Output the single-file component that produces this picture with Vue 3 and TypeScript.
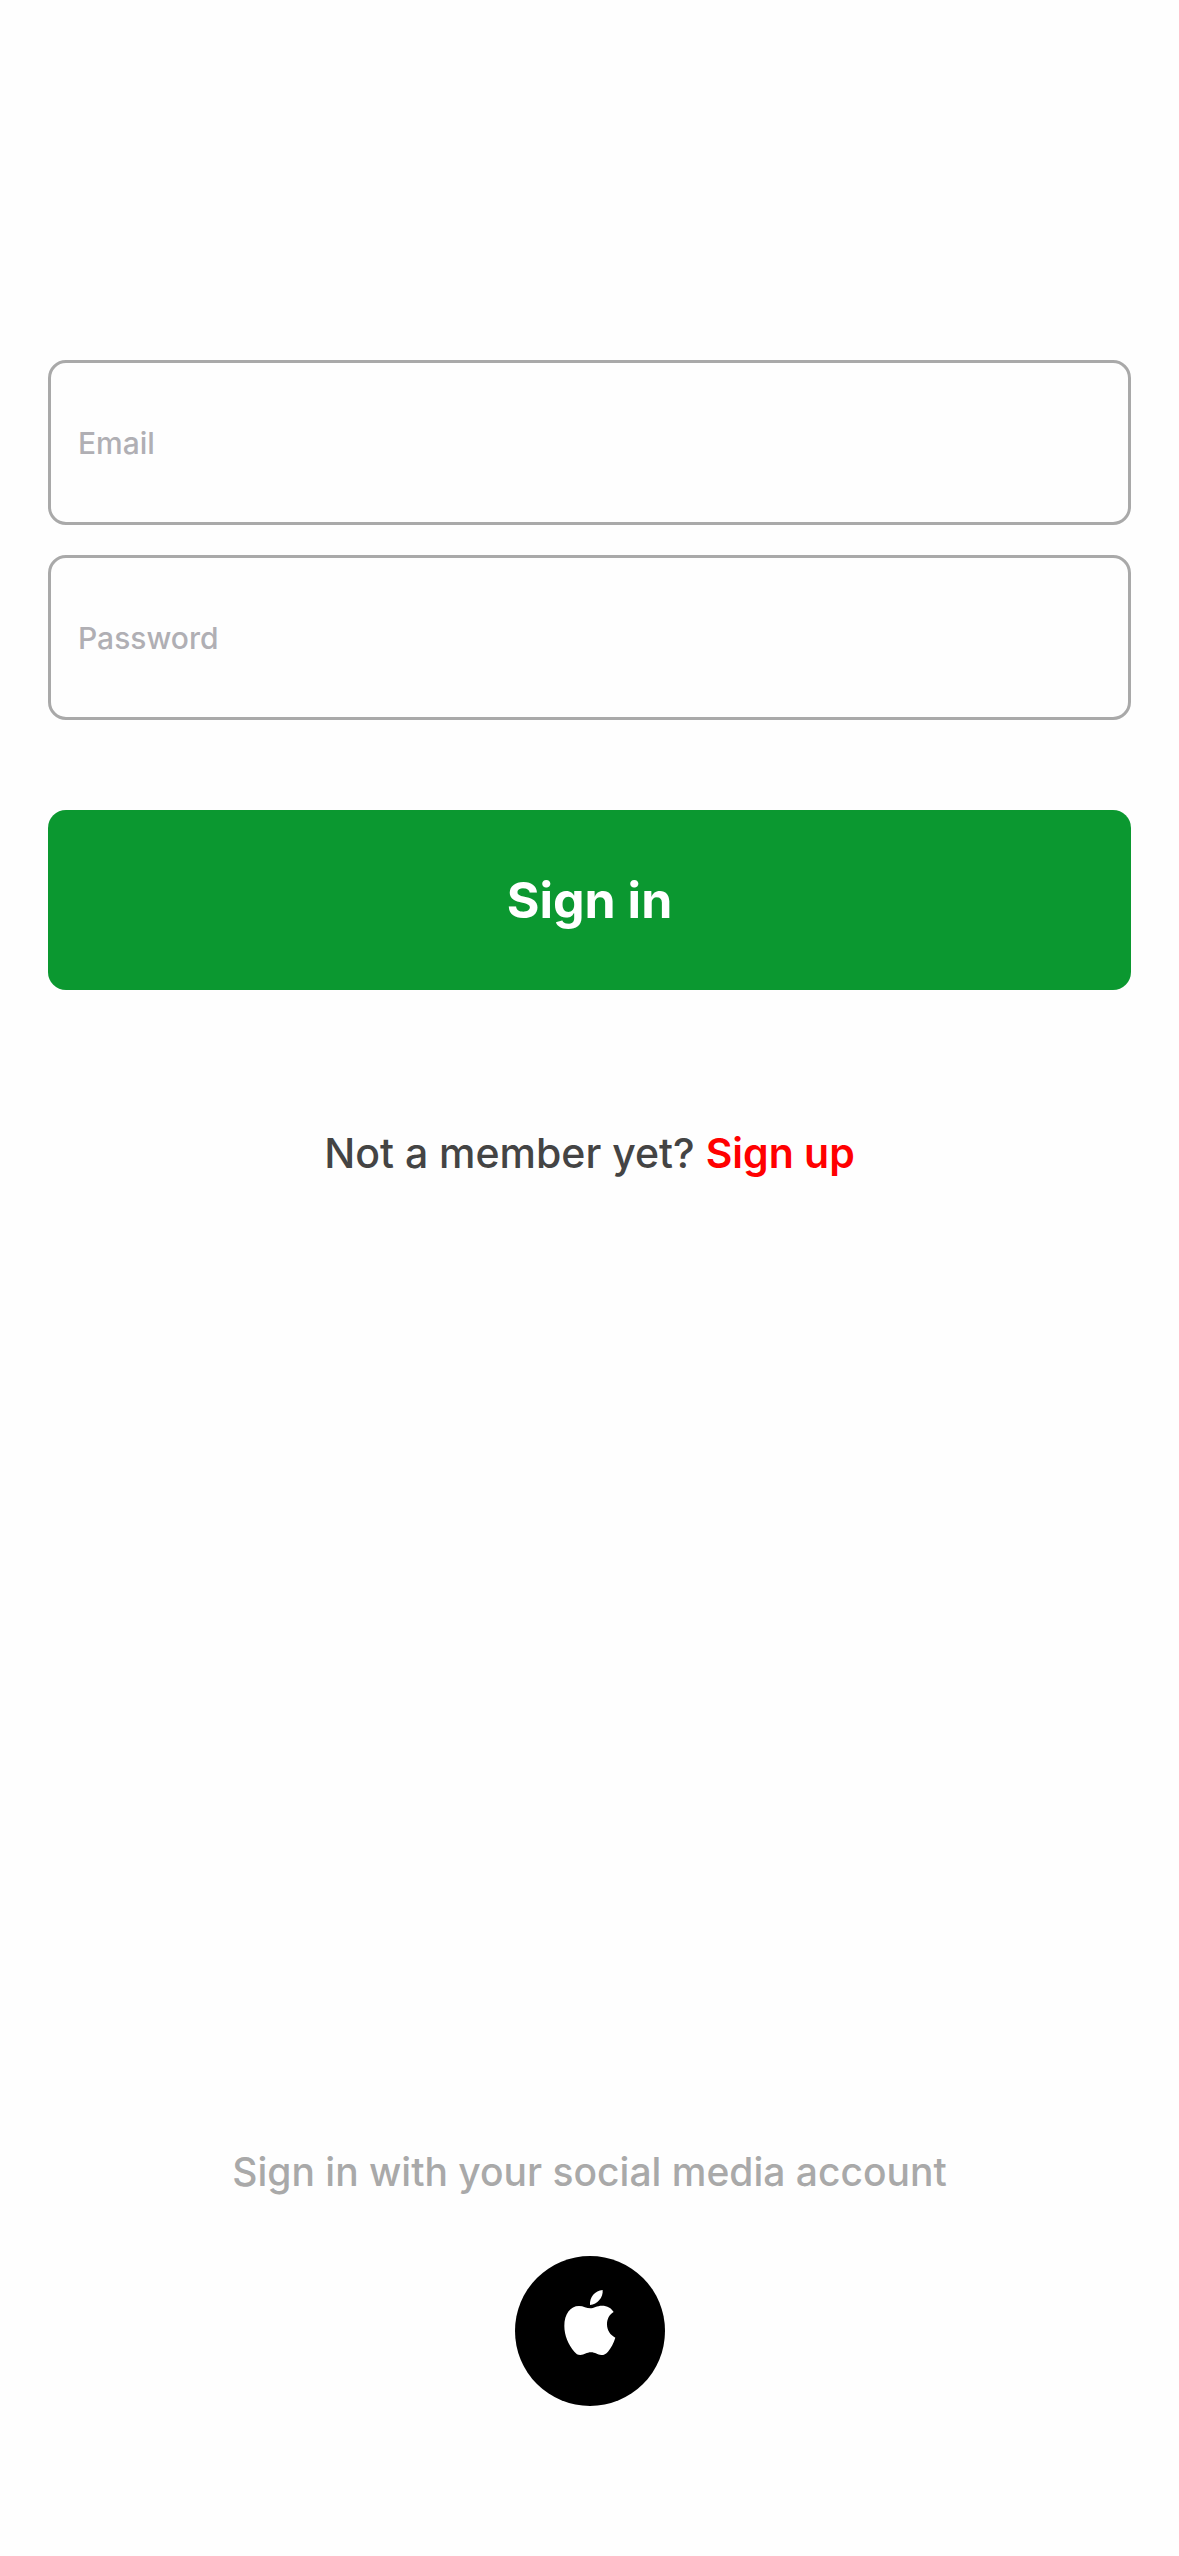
<script setup lang="ts">
import { ref } from 'vue'

const email = ref('')
const password = ref('')
</script>

<template>
  <main class="page">
    <form class="form" @submit.prevent>
      <input v-model="email" class="field" type="email" placeholder="Email" aria-label="Email" />
      <input v-model="password" class="field" type="password" placeholder="Password" aria-label="Password" />
      <button class="submit" type="submit">Sign in</button>
    </form>
    <p class="member">Not a member yet? <a class="signup" href="#">Sign up</a></p>
    <footer class="social">
      <p class="hint">Sign in with your social media account</p>
      <button class="apple" type="button" aria-label="Sign in with Apple">
        <svg class="logo" viewBox="0 0 450 450" aria-hidden="true">
          <g fill="#fff" transform="translate(-45 -48)">
            <path d="M270 195C268 172 285 152 308 150C310 172 292 194 270 195Z" />
            <path d="M237 198C250 198 260 205 271 205C281 205 291 197 306 197C322 197 334 204 341 216C328 223 321 237 321 253C321 271 331 286 346 293C341 309 333 324 324 335C318 342 312 345 304 345C292 345 286 337 273 337C260 337 253 345 241 345C233 345 228 341 223 335C205 314 193 286 193 258C193 222 211 198 237 198Z" />
          </g>
        </svg>
      </button>
    </footer>
  </main>
</template>

<style>
body {
  margin: 0;
  background: #fefefe;
}
</style>

<style scoped>
.page {
  box-sizing: border-box;
  min-height: 100vh;
  padding: 360px 48px 150px;
  display: flex;
  flex-direction: column;
  font-family: Inter, Roboto, sans-serif;
  font-weight: 500;
}

.form {
  display: flex;
  flex-direction: column;
  gap: 30px;
}

.field {
  box-sizing: border-box;
  width: 100%;
  height: 165px;
  padding: 0 27px;
  border: 3px solid #a9a9a9;
  border-radius: 18px;
  background: transparent;
  color: #444;
  font: 500 30px/36px Inter, Roboto, sans-serif;
  outline: none;
}

.field::placeholder {
  color: #b0afb4;
  opacity: 1;
}

.submit {
  height: 180px;
  margin-top: 60px;
  border: 0;
  border-radius: 18px;
  background: #0b9830;
  color: #fff;
  font: 700 50px/60px Inter, Roboto, sans-serif;
}

.member {
  margin: 138px 0 0;
  text-align: center;
  color: #444;
  font-size: 41px;
  line-height: 50px;
}

.signup {
  color: #f00;
  font-weight: 600;
  text-decoration: none;
}

.social {
  margin-top: auto;
  display: flex;
  flex-direction: column;
  align-items: center;
  gap: 60px;
}

.hint {
  margin: 0;
  color: #a9a9a9;
  font-size: 39px;
  line-height: 48px;
  text-align: center;
}

.apple {
  width: 150px;
  height: 150px;
  padding: 0;
  border: 0;
  border-radius: 50%;
  background: #000;
}

.logo {
  display: block;
  width: 100%;
  height: 100%;
}
</style>
